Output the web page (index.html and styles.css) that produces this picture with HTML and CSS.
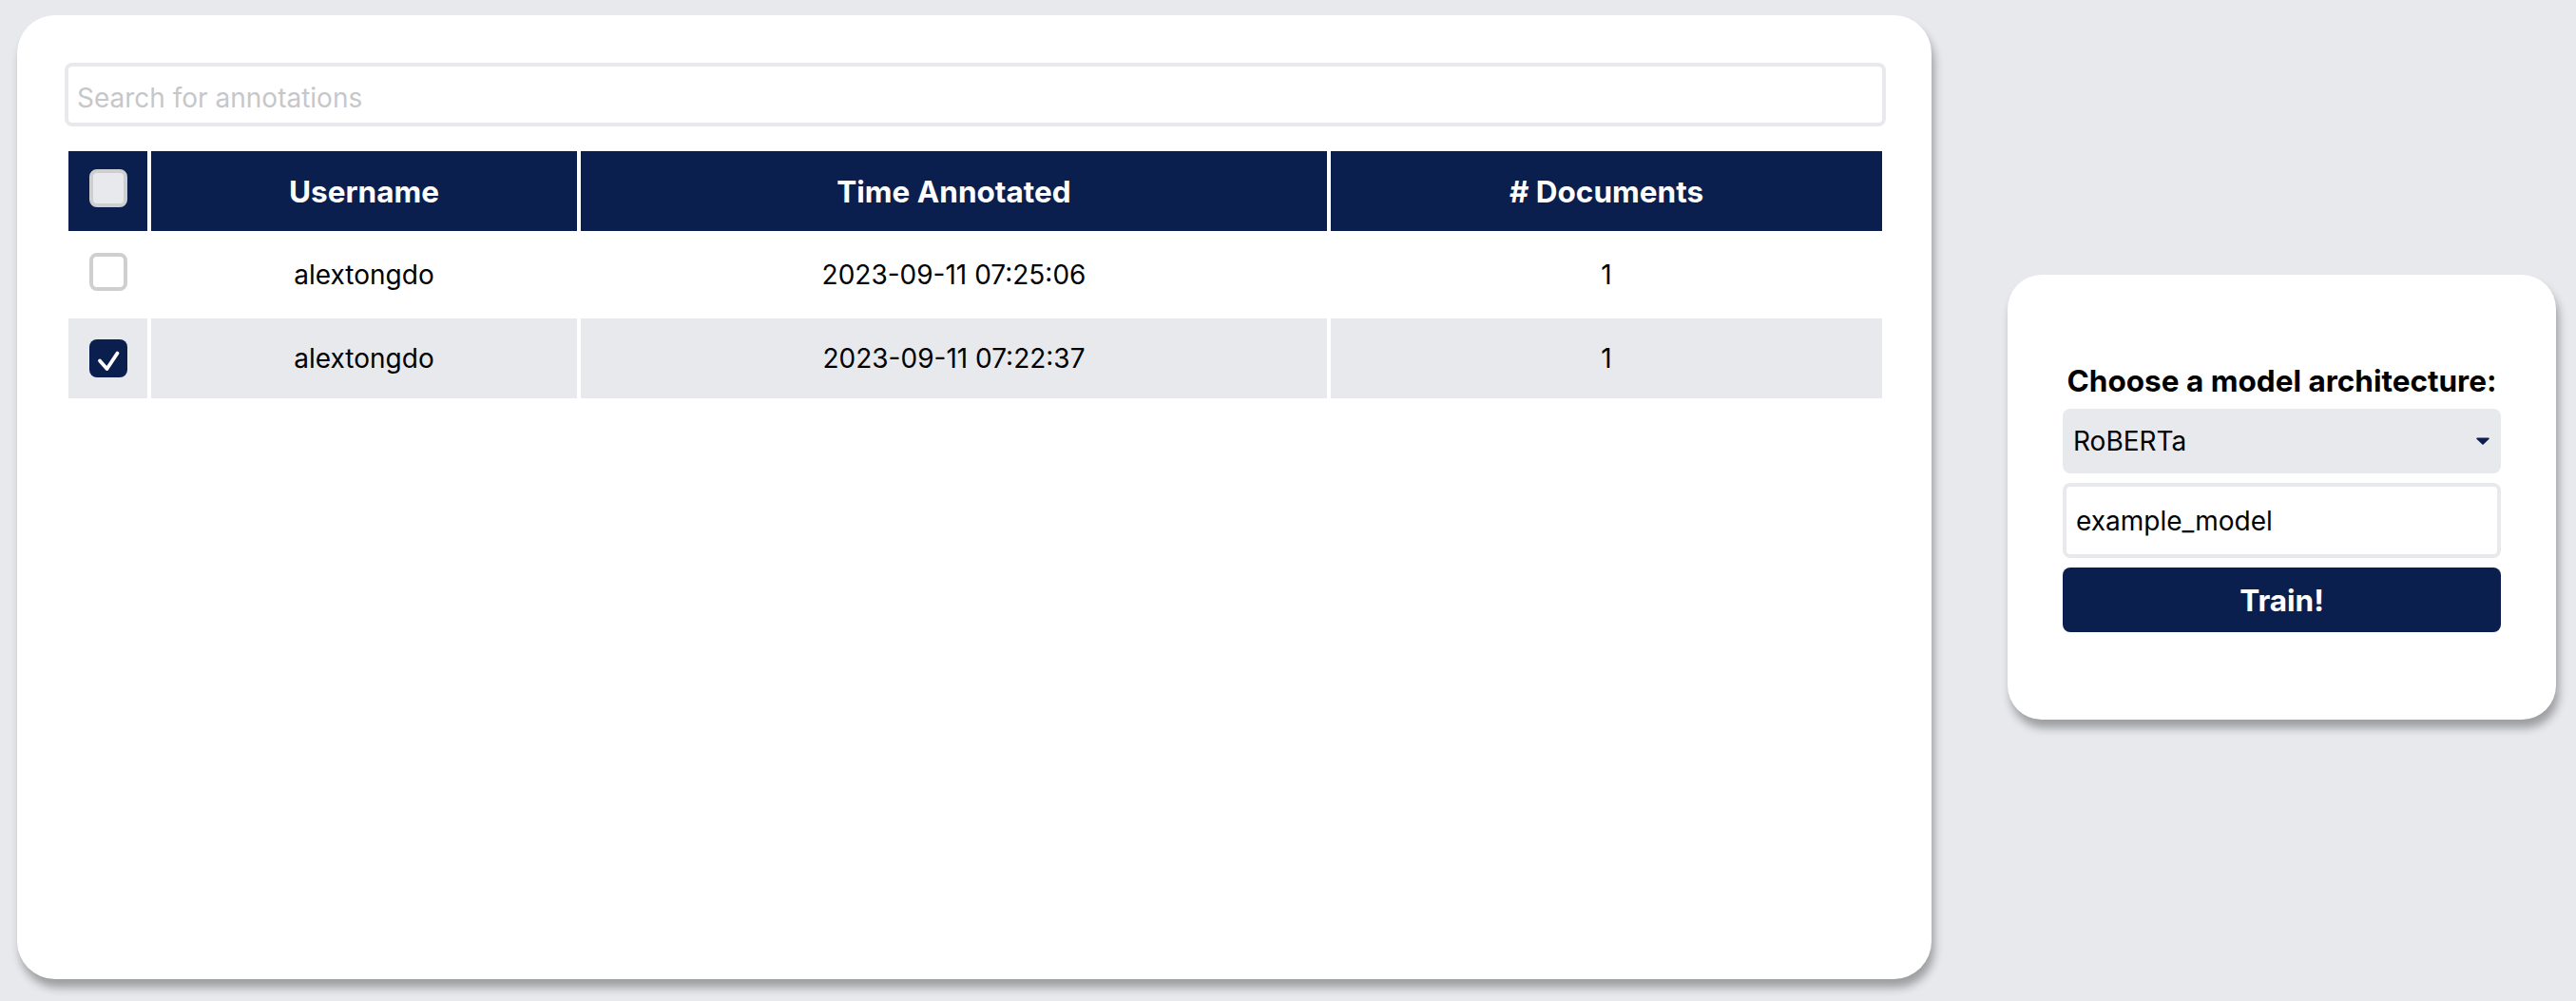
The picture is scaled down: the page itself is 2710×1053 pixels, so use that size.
FILE: index.html
```html
<!DOCTYPE html>
<html lang="en">
<head>
<meta charset="utf-8">
<title>Annotations</title>
<link rel="stylesheet" href="styles.css">
</head>
<body>
<div class="page">
  <section class="main-card">
    <input class="search" type="text" placeholder="Search for annotations">
    <table class="ann-table">
      <colgroup>
        <col class="col-check">
        <col class="col-user">
        <col class="col-time">
        <col class="col-docs">
      </colgroup>
      <thead>
        <tr>
          <th><span class="cb cb-header"></span></th>
          <th>Username</th>
          <th>Time Annotated</th>
          <th># Documents</th>
        </tr>
      </thead>
      <tbody>
        <tr>
          <td><span class="cb cb-empty"></span></td>
          <td>alextongdo</td>
          <td>2023-09-11 07:25:06</td>
          <td>1</td>
        </tr>
        <tr class="alt">
          <td><span class="cb cb-checked"><svg viewBox="0 0 40 40" width="40" height="40"><polyline points="11,22.5 18.5,31 29.5,14.5" fill="none" stroke="#ffffff" stroke-width="3.8" stroke-linecap="round" stroke-linejoin="round"/></svg></span></td>
          <td>alextongdo</td>
          <td>2023-09-11 07:22:37</td>
          <td>1</td>
        </tr>
      </tbody>
    </table>
  </section>
  <aside class="side-card">
    <div class="side-title">Choose a model architecture:</div>
    <div class="model-select">
      <span>RoBERTa</span>
      <svg class="arrow" viewBox="0 0 14 8" width="14" height="8"><path d="M1 0.5 H13 a0.8 0.8 0 0 1 0.6 1.3 L7.6 7.4 a0.8 0.8 0 0 1 -1.2 0 L0.4 1.8 A0.8 0.8 0 0 1 1 0.5 Z" fill="#0b1f4f"/></svg>
    </div>
    <input class="model-name" type="text" value="example_model">
    <button class="train-btn" type="button">Train!</button>
  </aside>
</div>
</body>
</html>
```

FILE: styles.css
```css
* {
  box-sizing: border-box;
}

html, body {
  margin: 0;
  padding: 0;
  background: #e8e9ed;
  font-family: "Inter", "Noto Sans", sans-serif;
  color: #000;
}

.page {
  display: flex;
  align-items: center;
  gap: 80px;
  height: 1053px;
  padding: 16px 21px 23px 18px;
}

.main-card {
  flex: 1;
  align-self: stretch;
  background: #fff;
  border-radius: 40px;
  box-shadow: 3px 9px 10px rgba(0, 0, 0, 0.32);
  padding: 50px 48px 50px 50px;
  display: flex;
  flex-direction: column;
}

.search {
  width: 100%;
  height: 67px;
  border: 4px solid #e8e9ed;
  border-radius: 8px;
  padding: 6px 9px 0 9px;
  font-family: inherit;
  font-size: 28px;
  color: #000;
  outline: none;
  background: #fff;
}

.search::placeholder {
  color: #c6c7cb;
}

.ann-table {
  margin-top: 22px;
  width: 100%;
  table-layout: fixed;
  border-collapse: separate;
  border-spacing: 4px;
}

.col-check { width: 83px; }
.col-user { width: 448px; }
.col-time { width: 785px; }

.ann-table th,
.ann-table td {
  height: 84px;
  padding: 0;
  text-align: center;
  vertical-align: middle;
}

.ann-table th {
  background: #0b1f4f;
  color: #fff;
  font-weight: 700;
  font-size: 31.5px;
}

.ann-table td {
  font-size: 28px;
  font-weight: 400;
  background: #fff;
}

.ann-table tr.alt td {
  background: #e8e9ed;
}

.cb {
  display: inline-block;
  width: 40px;
  height: 40px;
  border-radius: 8px;
  vertical-align: middle;
  position: relative;
}

.cb-header {
  background: #e8e9ed;
  border: 4px solid #cfcfd1;
  top: -4px;
}

.cb-empty {
  background: #fff;
  border: 4px solid #cfcfd1;
  top: -3px;
}

.cb-checked {
  background: #0b1f4f;
}

.cb-checked svg {
  display: block;
}

.side-card {
  width: 577px;
  background: #fff;
  border-radius: 36px;
  box-shadow: 3px 9px 10px rgba(0, 0, 0, 0.32);
  padding: 92px 58px;
  display: flex;
  flex-direction: column;
  gap: 10px;
}

.side-title {
  font-weight: 700;
  font-size: 31.5px;
  text-align: center;
  white-space: nowrap;
}

.model-select {
  height: 68px;
  background: #e8e9ed;
  border-radius: 8px;
  display: flex;
  align-items: center;
  justify-content: space-between;
  padding: 0 12px 0 11px;
  font-size: 28px;
}

.model-select .arrow {
  display: block;
}

.model-name {
  width: 100%;
  height: 79px;
  border: 4px solid #e8e9ed;
  border-radius: 8px;
  padding: 0 10px;
  font-family: inherit;
  font-size: 28px;
  color: #000;
  background: #fff;
  outline: none;
}

.train-btn {
  height: 68px;
  border: none;
  border-radius: 8px;
  background: #0b1f4f;
  color: #fff;
  font-family: inherit;
  font-weight: 700;
  font-size: 31.5px;
  cursor: pointer;
}
```
